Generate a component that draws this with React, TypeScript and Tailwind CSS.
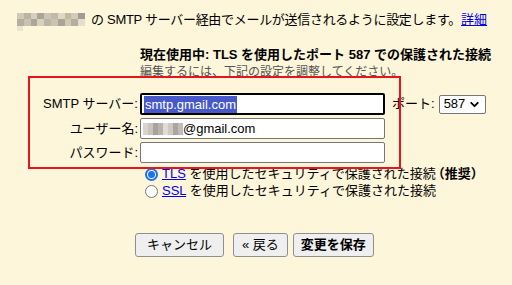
import { ChevronDown } from "lucide-react";

const mosaicTop = ["#cfc8b4", "#b9b4a6", "#d6cfba", "#a9a59c", "#cdc5b1", "#bfb9a9", "#e0d8c0", "#c4b8a0", "#d2cbb7", "#9f9c95"];
const mosaicBottom = ["#b3ae9f", "#c9c2ae", "#aaa69b", "#d8d0b9", "#bab5a7", "#cbc3ae", "#a8a49a", "#d0c8b2", "#b4ae9f", "#e6dec6"];
const userMosaic = ["#d8d3cc", "#c9c3bb", "#a7a1a0", "#b9b3ad", "#e0dbd4", "#cfc9c2", "#aaa4a2", "#c2bcb6"];

const Mosaic = () => (
    <span className="inline-flex flex-col align-top w-[68px] mr-[6px] mt-[1px]">
        <span className="flex">
            {mosaicTop.map((c, i) => (
                <span key={i} className="flex-1 h-[6px]" style={{ background: c }} />
            ))}
        </span>
        <span className="flex">
            {mosaicBottom.map((c, i) => (
                <span key={i} className="flex-1 h-[7px]" style={{ background: c }} />
            ))}
        </span>
        <span className="w-[6px] h-[5px] bg-[#ebe4cf]" />
    </span>
);

const FieldRow = ({ label, children }: { label: string; children: React.ReactNode }) => (
    <div className="flex items-center">
        <div className="w-[140px] text-right pr-[2px]">{label}</div>
        {children}
    </div>
);

const App = () => {
    return (
        <div
            className="relative w-[512px] h-[285px] overflow-hidden bg-[#fdf6da] text-[13px] leading-[16px] text-black"
            style={{ fontFamily: '"Liberation Sans", "Noto Sans CJK JP", sans-serif' }}
        >
            {/* TOP */}
            <div className="flex items-start pl-[17px] pt-[12px] h-[40px]">
                <Mosaic />
                <span className="tracking-[-0.3px]">の SMTP サーバー経由でメールが送信されるように設定します。</span>
                <a className="text-[#0000ee] underline">詳細</a>
            </div>

            {/* STATUS */}
            <div className="pl-[140px] mt-[7px]">
                <div className="font-bold">現在使用中: TLS を使用したポート 587 での保護された接続</div>
                <div className="text-[12px] text-[#555] mt-[1px]">編集するには、下記の設定を調整してください。</div>
            </div>

            {/* FORM */}
            <div className="flex flex-col gap-[3px] mt-[13px]">
                <FieldRow label="SMTP サーバー:">
                    <div className="w-[245px] h-[22px] border-2 border-black rounded-[2px] bg-white flex items-center pl-[2px]">
                        <span className="bg-[#4759c9] text-white px-[1px] leading-[17px]">smtp.gmail.com</span>
                    </div>
                    <span className="ml-[7px]">ポート:</span>
                    <div className="ml-[4px] w-[47px] h-[19px] border border-[#767676] rounded-[2px] bg-white flex items-center justify-between px-[4px]">
                        <span>587</span>
                        <ChevronDown size={13} strokeWidth={3.5} />
                    </div>
                </FieldRow>
                <FieldRow label="ユーザー名:">
                    <div className="w-[245px] h-[21px] border border-[#767676] rounded-[2px] bg-white flex items-center pl-[2px]">
                        <span className="flex">
                            {userMosaic.map((c, i) => (
                                <span key={i} className="w-[5px] h-[12px]" style={{ background: c }} />
                            ))}
                        </span>
                        <span>@gmail.com</span>
                    </div>
                </FieldRow>
                <FieldRow label="パスワード:">
                    <div className="w-[245px] h-[21px] border border-[#767676] rounded-[2px] bg-white" />
                </FieldRow>
            </div>

            {/* RED BOX */}
            <div className="absolute left-[28px] top-[76px] w-[373px] h-[93px] border-2 border-[#e8141c]" />

            {/* SECURITY */}
            <div className="pl-[145px] mt-[3px] flex flex-col gap-[1px]">
                <div className="flex items-center gap-[4px]">
                    <span className="w-[13px] h-[13px] rounded-full border-2 border-[#1a73e8] bg-white flex items-center justify-center">
                        <span className="w-[7px] h-[7px] rounded-full bg-[#1a73e8]" />
                    </span>
                    <span>
                        <a className="text-[#0000ee] underline">TLS</a> を使用したセキュリティで保護された接続
                        <b className="-ml-[4px]">（推奨）</b>
                    </span>
                </div>
                <div className="flex items-center gap-[4px]">
                    <span className="w-[13px] h-[13px] rounded-full border border-[#767676] bg-white" />
                    <span>
                        <a className="text-[#0000ee] underline">SSL</a> を使用したセキュリティで保護された接続
                    </span>
                </div>
            </div>

            {/* BUTTONS */}
            <div className="flex items-center pl-[135px] mt-[34px]">
                <button className="h-[24px] px-[11px] border border-[#8f8f8f] rounded-[3px] bg-[#efefef]">キャンセル</button>
                <button className="ml-[9px] h-[24px] px-[8px] border border-[#8f8f8f] rounded-[3px] bg-[#efefef]">« 戻る</button>
                <button className="ml-[5px] h-[24px] px-[7px] border border-[#8f8f8f] rounded-[3px] bg-[#efefef] font-bold">変更を保存</button>
            </div>
        </div>
    );
};

export default App;
